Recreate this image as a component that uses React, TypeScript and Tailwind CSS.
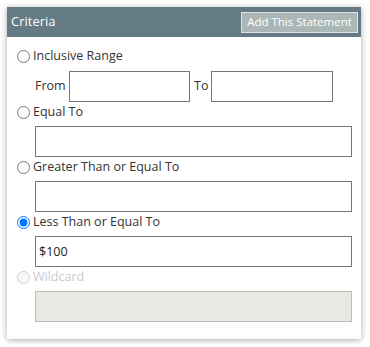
import React from "react";

const inputCls =
  "block w-full h-[31px] border border-[#767676] bg-white px-[3px] text-[12.5px] text-[#222] outline-none";

function Option({
  label,
  checked,
  disabled,
}: {
  label: string;
  checked?: boolean;
  disabled?: boolean;
}) {
  return (
    <label
      className={
        "flex h-[20px] items-center gap-[3px] text-[12.5px] " +
        (disabled ? "text-[#c9c9d1]" : "text-[#333]")
      }
    >
      <input
        type="radio"
        name="criteria"
        defaultChecked={checked}
        disabled={disabled}
        className="m-0 ml-[1px] h-[13px] w-[13px]"
      />
      {label}
    </label>
  );
}

export default function App() {
  return (
    <div className="min-h-screen bg-white p-[7px] font-['Open_Sans',sans-serif]">
      <div className="w-[354px] bg-white shadow-[0_1px_6px_rgba(0,0,0,0.35)]">
        <div className="flex h-[30px] items-center justify-between bg-[#647a85] pl-[4px] pr-[3px]">
          <span className="text-[13px] text-white">Criteria</span>
          <button
            type="button"
            className="h-[21px] w-[117px] border border-[#dfe3e3] bg-[#aab7b6] text-[11.5px] text-white"
          >
            Add This Statement
          </button>
        </div>
        <div className="pb-[17px] pl-[9px] pr-[9px] pt-[9px]">
          <Option label="Inclusive Range" />
          <div className="mt-[5px] flex items-center pl-[19px]">
            <span className="w-[34px] text-[12.5px] text-[#333]">From</span>
            <input className={inputCls + " !w-[121px]"} />
            <span className="w-[21px] pl-[4px] text-[12.5px] text-[#333]">To</span>
            <input className={inputCls + " !w-[122px]"} />
          </div>
          <Option label="Equal To" />
          <div className="mt-[4px] pl-[19px]">
            <input className={inputCls} />
          </div>
          <Option label="Greater Than or Equal To" />
          <div className="mt-[4px] pl-[19px]">
            <input className={inputCls} />
          </div>
          <Option label="Less Than or Equal To" checked />
          <div className="mt-[4px] pl-[19px]">
            <input className={inputCls} defaultValue="$100" />
          </div>
          <Option label="Wildcard" disabled />
          <div className="mt-[4px] pl-[19px]">
            <input
              disabled
              className="block h-[31px] w-full border border-[#bdbcb5] bg-[#e9e8e2] outline-none"
            />
          </div>
        </div>
      </div>
    </div>
  );
}
